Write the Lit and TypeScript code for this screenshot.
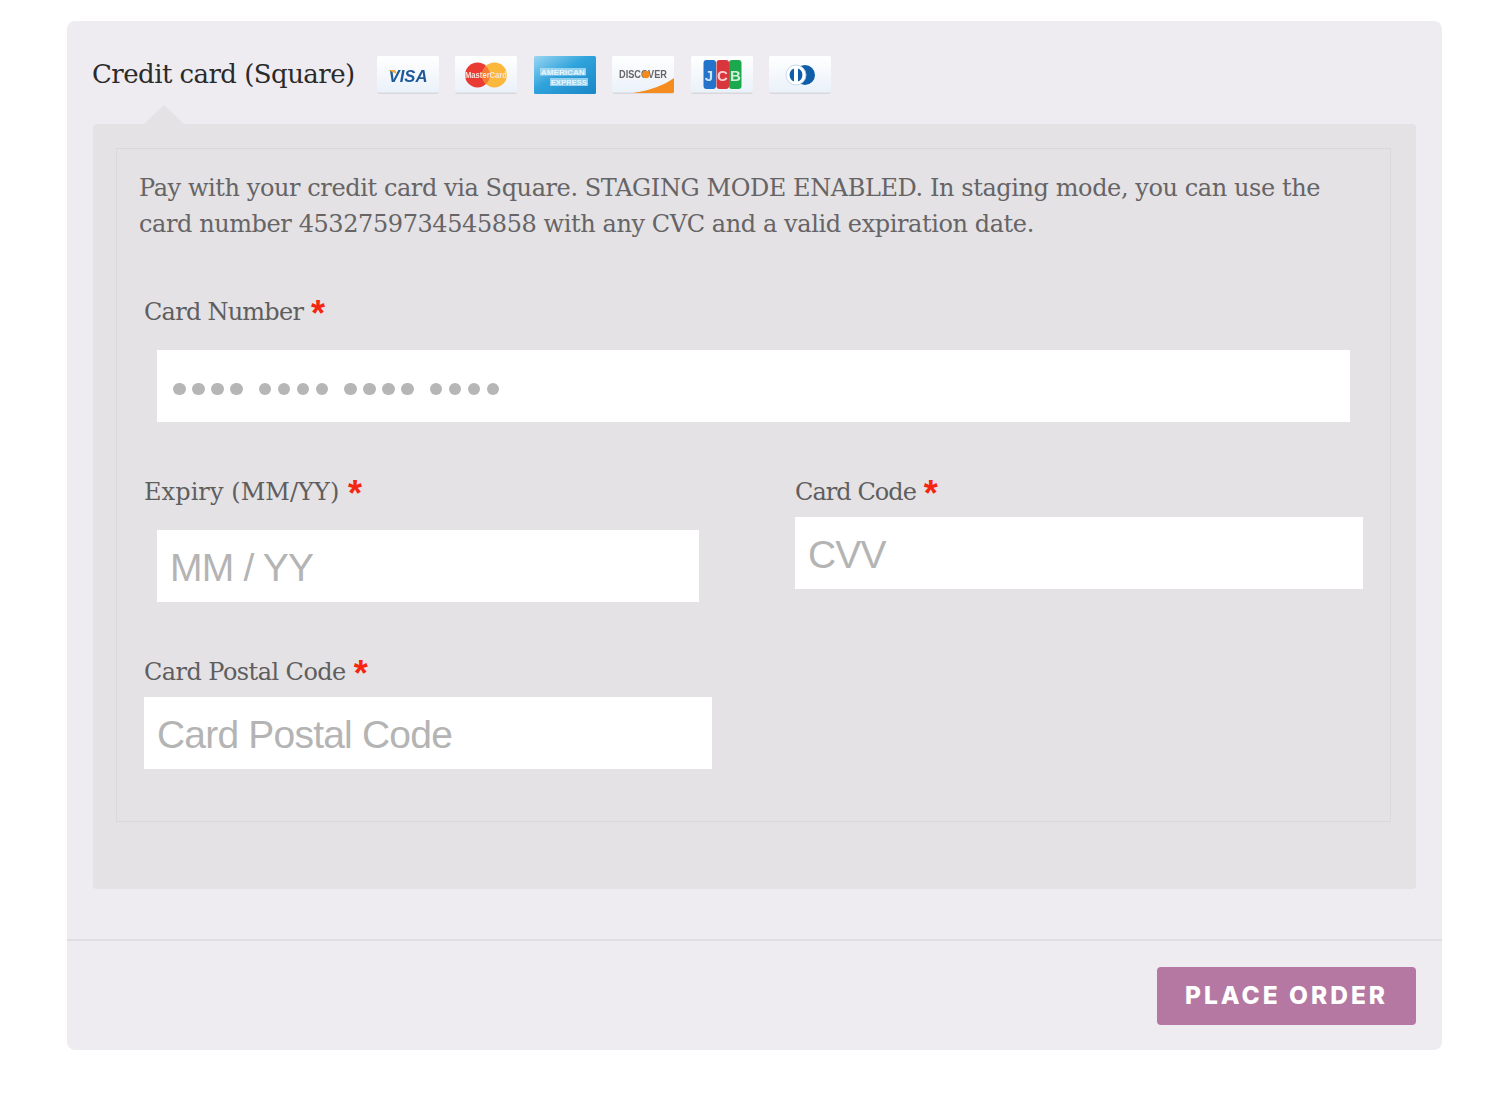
import { LitElement, html, css, svg } from "lit";
import { customElement } from "lit/decorators.js";

const soft = svg`<filter id="soft" x="-10%" y="-10%" width="120%" height="120%"><feGaussianBlur stdDeviation="0.5"/></filter>`;
const sans = "Liberation Sans, sans-serif";

const wrap = (bg: string, inner: unknown) => html`<svg class="pay" viewBox="0 0 62 38" width="62" height="38" aria-hidden="true">
  <defs>${soft}
    <linearGradient id="w" x1="0" y1="0" x2="0" y2="1"><stop offset="0" stop-color="#ffffff"/><stop offset="1" stop-color="${bg}"/></linearGradient>
  </defs>
  ${inner}
</svg>`;

const base = svg`<rect x="0.5" y="0.5" width="61" height="37.500" rx="1.5" fill="#d9d8dc"/><rect x="0" y="0" width="62" height="36.5" rx="1.5" fill="url(#w)"/>`;

const icons = [
  wrap("#eaf1f9", svg`${base}
    <g filter="url(#soft)"><text x="31" y="26" text-anchor="middle" font-family="${sans}" font-size="16.500" font-weight="700" font-style="italic" textLength="39" lengthAdjust="spacingAndGlyphs" fill="#1f5a9a">VISA</text>
    <path d="M11 14h7l2 4z" fill="#f0a63a"/></g>`),
  wrap("#fdf5ea", svg`${base}
    <g filter="url(#soft)"><circle cx="22.500" cy="19" r="12.500" fill="#ea3a32"/><circle cx="39.500" cy="19" r="12.500" fill="#fbb83c"/>
    <path d="M31 10a12.500 12.500 0 0 1 0 18a12.500 12.500 0 0 1 0-18z" fill="#f57a30"/>
    <text x="31" y="22" text-anchor="middle" font-family="${sans}" font-size="8.500" font-weight="700" textLength="42" lengthAdjust="spacingAndGlyphs" fill="#f8e6de">MasterCard</text></g>`),
  svg`<svg class="pay" viewBox="0 0 62 38" width="62" height="38" aria-hidden="true"><defs>${soft}
    <linearGradient id="a" x1="0" y1="0" x2="1" y2="1"><stop offset="0" stop-color="#9ad6f2"/><stop offset="0.45" stop-color="#2fa3dc"/><stop offset="1" stop-color="#1a86c6"/></linearGradient></defs>
    <rect width="62" height="38" rx="1.5" fill="url(#a)"/>
    <g filter="url(#soft)"><rect x="6" y="12" width="46" height="7.500" fill="#b8e2f6" opacity=".75"/><rect x="16" y="22" width="38" height="8" fill="#b8e2f6" opacity=".75"/>
    <text x="29" y="18.500" text-anchor="middle" font-family="${sans}" font-size="7" font-weight="700" textLength="44" lengthAdjust="spacingAndGlyphs" fill="#e8f6fd">AMERICAN</text>
    <text x="35" y="29" text-anchor="middle" font-family="${sans}" font-size="7" font-weight="700" textLength="36" lengthAdjust="spacingAndGlyphs" fill="#e8f6fd">EXPRESS</text></g></svg>`,
  wrap("#fdf1e4", svg`${base}
    <path d="M21 37 C40 34 52 29 62 22 V36 Q62 37 60 37z" fill="#f68b1f"/>
    <g filter="url(#soft)"><text x="31" y="22" text-anchor="middle" font-family="${sans}" font-size="10" font-weight="700" textLength="48" lengthAdjust="spacingAndGlyphs" fill="#666">DISCOVER</text>
    <circle cx="34" cy="18.500" r="3.800" fill="#f68b1f"/></g>`),
  wrap("#eaf0f8", svg`${base}
    <g filter="url(#soft)"><rect x="12.500" y="4" width="12.500" height="29" rx="3" fill="#2273c9"/><rect x="25.500" y="4" width="12.500" height="29" rx="3" fill="#d8353c"/><rect x="38" y="4" width="12.500" height="29" rx="3" fill="#1fa94d"/>
    <text x="18" y="24.500" text-anchor="middle" font-family="${sans}" font-size="15" font-weight="700" fill="#cfe4f6">J</text>
    <text x="31.500" y="24.500" text-anchor="middle" font-family="${sans}" font-size="15" font-weight="700" fill="#f6d0d2">C</text>
    <text x="44.500" y="24.500" text-anchor="middle" font-family="${sans}" font-size="15" font-weight="700" fill="#d0f0da">B</text></g>`),
  wrap("#eaf1f9", svg`${base}
    <g filter="url(#soft)"><rect x="26" y="9" width="20" height="20" rx="10" fill="#0f5da8"/>
    <circle cx="27" cy="19" r="10" fill="#fff" stroke="#b9d1e8" stroke-width="0.800"/>
    <path d="M25 12.500a7 7 0 0 0 0 13z" fill="#0f5da8"/><path d="M29 12.500a7 7 0 0 1 0 13z" fill="#0f5da8"/></g>`),
];

@customElement("app-root")
export class AppRoot extends LitElement {
  static styles = css`
    :host { display: block; background: #fff; min-height: 1100px; padding: 21px 57px 50px 67px; box-sizing: border-box; font-family: "DejaVu Serif", "Liberation Serif", serif; }
    * { box-sizing: border-box; }
    .card { background: #eeecf0; border-radius: 8px; height: 1029px; display: flex; flex-direction: column; }
    .method { display: flex; align-items: center; gap: 16.5px; height: 103px; padding: 4px 0 0 25px; }
    .title { font-size: 26px; letter-spacing: -0.55px; color: #2b2a2b; margin: 0 5.5px 2px 0; white-space: nowrap; }
    .pay { display: block; flex: none; }
    .panel { position: relative; margin: 0 26px; height: 765px; background: #e4e2e4; border-radius: 4px; padding: 24px 25px 0 23px; }
    .panel::before { content: ""; position: absolute; left: 51px; top: -19px; border-left: 20px solid transparent; border-right: 20px solid transparent; border-bottom: 19px solid #e4e2e4; }
    .fieldset { border: 1px solid #dad8da; height: 674px; padding: 21px 27px 0 22px; }
    .desc { margin: 0 0 52px; font-size: 24px; line-height: 36px; letter-spacing: -0.41px; color: #666466; }
    .fields { margin-left: 5px; display: grid; grid-template-columns: 568px 568px; column-gap: 83px; align-items: start; }
    .full { grid-column: 1 / -1; }
    label { display: block; height: 36px; font-size: 24px; line-height: 36px; letter-spacing: -0.75px; color: #5f5e5f; margin-bottom: 7px; white-space: nowrap; }
    label.expiry { letter-spacing: 0.07px; }
    label.postal { letter-spacing: -0.56px; }
    label.code { letter-spacing: -0.95px; }
    .req { color: #f5260f; font-family: "Liberation Sans", sans-serif; font-size: 36px; font-weight: 700; line-height: 20px; margin-left: 1px; vertical-align: -6px; }
    .field { display: flex; flex-direction: column; margin-bottom: 52px; }
    .input { display: flex; align-items: center; height: 72px; background: #fff; padding: 4px 13px 0; font-family: "Liberation Sans", sans-serif; font-size: 39px; letter-spacing: -0.8px; color: #b4b4b4; white-space: nowrap; }
    .inset { margin: 13px 13px 0; }
    .dots { gap: 16px; padding: 6px 0 0 16px; }
    .group { display: flex; gap: 6.5px; }
    .dot { width: 12.500px; height: 12.500px; border-radius: 50%; background: #b6b6b6; }
    .footer { margin-top: 50px; border-top: 2px solid #e0dee1; padding: 26px 26px 0; display: flex; justify-content: flex-end; }
    button { width: 259px; height: 58px; border: 0; border-radius: 4px; background: #b578a3; color: #fff; font-family: Inter, Lato, sans-serif; font-weight: 800; font-size: 24.5px; letter-spacing: 3px; padding: 0 0 2px; }
  `;

  render() {
    const group = html`<span class="group">${[0, 1, 2, 3].map(() => html`<span class="dot"></span>`)}</span>`;
    return html`<div class="card">
      <div class="method">
        <span class="title">Credit card (Square)</span>
        ${icons}
      </div>
      <div class="panel">
        <div class="fieldset">
          <p class="desc">Pay with your credit card via Square. STAGING MODE ENABLED. In staging mode, you can use the card number 4532759734545858 with any CVC and a valid expiration date.</p>
          <div class="fields">
            <div class="field full">
              <label>Card Number <span class="req">*</span></label>
              <div class="input inset dots">${group}${group}${group}${group}</div>
            </div>
            <div class="field">
              <label class="expiry">Expiry (MM/YY) <span class="req">*</span></label>
              <div class="input inset">MM / YY</div>
            </div>
            <div class="field">
              <label class="code">Card Code <span class="req">*</span></label>
              <div class="input">CVV</div>
            </div>
            <div class="field">
              <label class="postal">Card Postal Code <span class="req">*</span></label>
              <div class="input">Card Postal Code</div>
            </div>
          </div>
        </div>
      </div>
      <div class="footer"><button>PLACE ORDER</button></div>
    </div>`;
  }
}
